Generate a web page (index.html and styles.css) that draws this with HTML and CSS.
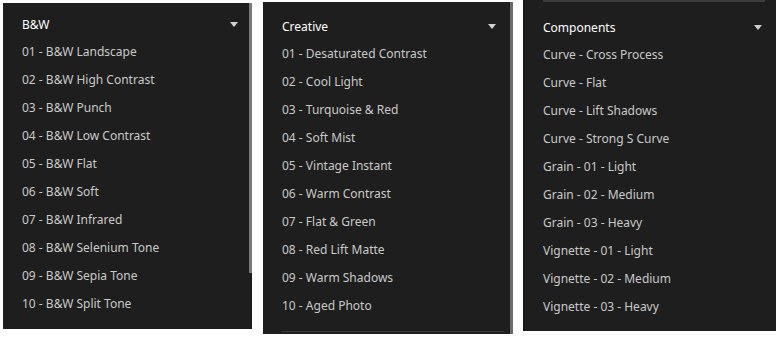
FILE: index.html
```html
<!DOCTYPE html>
<html>
<head>
	<meta charset="UTF-8"/>
	<link rel="stylesheet" href="styles.css">
</head>
<body>

<div class="panels">
	<!--黑白-->
	<div class="panel bw">
		<div class="head">
			<span class="title">B&amp;W</span>
			<span class="arrow"></span>
		</div>
		<ul class="items">
			<li>01 - B&amp;W Landscape</li>
			<li>02 - B&amp;W High Contrast</li>
			<li>03 - B&amp;W Punch</li>
			<li>04 - B&amp;W Low Contrast</li>
			<li>05 - B&amp;W Flat</li>
			<li>06 - B&amp;W Soft</li>
			<li>07 - B&amp;W Infrared</li>
			<li>08 - B&amp;W Selenium Tone</li>
			<li>09 - B&amp;W Sepia Tone</li>
			<li>10 - B&amp;W Split Tone</li>
		</ul>
		<span class="scroll"></span>
	</div>
	<!--创意-->
	<div class="panel creative">
		<div class="head">
			<span class="title">Creative</span>
			<span class="arrow"></span>
		</div>
		<ul class="items">
			<li>01 - Desaturated Contrast</li>
			<li>02 - Cool Light</li>
			<li>03 - Turquoise &amp; Red</li>
			<li>04 - Soft Mist</li>
			<li>05 - Vintage Instant</li>
			<li>06 - Warm Contrast</li>
			<li>07 - Flat &amp; Green</li>
			<li>08 - Red Lift Matte</li>
			<li>09 - Warm Shadows</li>
			<li>10 - Aged Photo</li>
		</ul>
		<div class="line"></div>
	</div>
	<!--组件-->
	<div class="panel comp">
		<div class="topline"></div>
		<div class="head">
			<span class="title">Components</span>
			<span class="arrow"></span>
		</div>
		<ul class="items">
			<li>Curve - Cross Process</li>
			<li>Curve - Flat</li>
			<li>Curve - Lift Shadows</li>
			<li>Curve - Strong S Curve</li>
			<li>Grain - 01 - Light</li>
			<li>Grain - 02 - Medium</li>
			<li>Grain - 03 - Heavy</li>
			<li>Vignette - 01 - Light</li>
			<li>Vignette - 02 - Medium</li>
			<li>Vignette - 03 - Heavy</li>
		</ul>
	</div>
</div>

</body>
</html>
```

FILE: styles.css
```css
*{
	border:0;
	padding:0;
	margin:0;
	box-sizing:border-box;
}
body{
	background-color:#fff;
	font-family:"Noto Sans",sans-serif;
	font-size:12px;
}
.panels{
	display:flex;
	align-items:flex-start;
	padding-left:3px;
}
.panel{
	background-color:#1e1e1e;
	position:relative;
}
.bw{
	width:249px;
	height:326px;
	margin-top:3px;
	padding:7px 19px 0 19px;
}
.creative{
	width:250px;
	height:332px;
	margin-top:2px;
	margin-left:11px;
	padding:10px 19px 0 19px;
	border-right:3px solid #6b6b6b;
}
.comp{
	width:253px;
	height:331px;
	margin-left:10px;
	padding:13px 19px 0 18px;
	border-left:2px solid #161616;
}
.head{
	display:flex;
	justify-content:space-between;
	align-items:center;
	height:28px;
	color:#fff;
}
.arrow{
	width:0;
	height:0;
	border-left:4px solid transparent;
	border-right:4px solid transparent;
	border-top:5px solid #d0d0d0;
	margin-right:-5px;
}
.items{
	list-style:none;
	color:#c9c9c9;
}
.items li{
	height:28px;
	line-height:28px;
	white-space:nowrap;
}
.scroll{
	position:absolute;
	right:0;
	top:0;
	width:3px;
	height:270px;
	background-color:#7a7a7a;
}
.line{
	position:absolute;
	left:19px;
	right:6px;
	bottom:2px;
	height:1px;
	background-color:#3a3a3a;
}
.topline{
	position:absolute;
	left:18px;
	right:11px;
	top:0;
	height:2px;
	background-color:#3c3c3c;
}
```
